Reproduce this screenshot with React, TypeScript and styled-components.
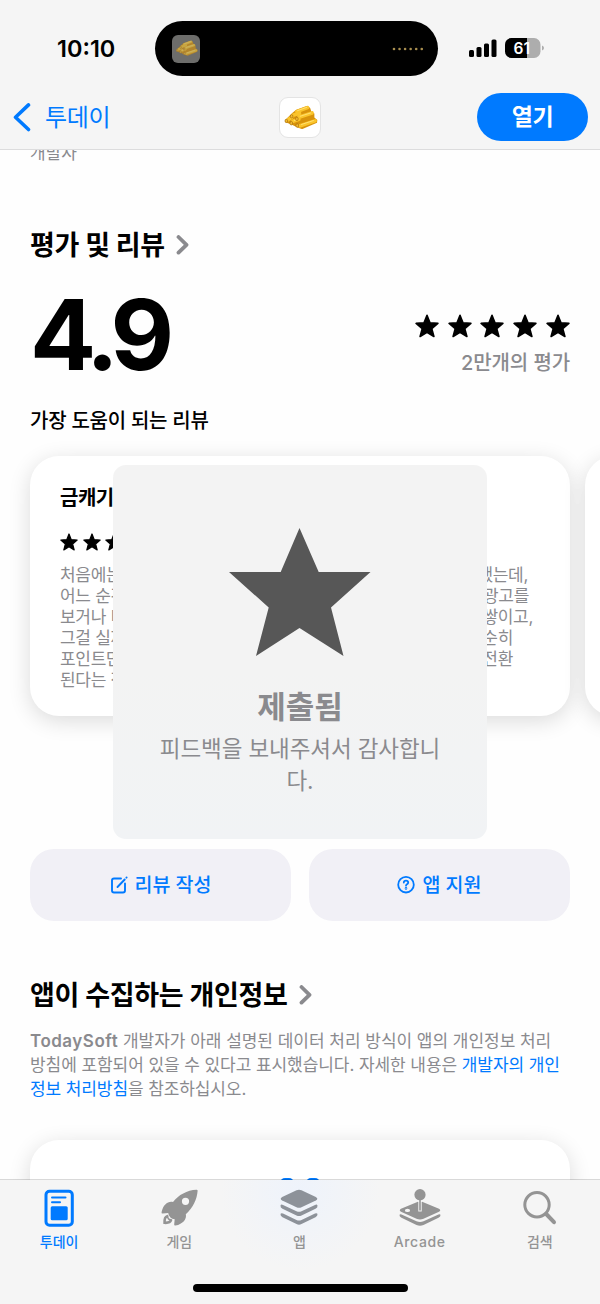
import React from 'react';
import styled, { createGlobalStyle, css } from 'styled-components';

const BLUE = '#007aff';
const GRAY = '#8a8a8e';

const GlobalStyle = createGlobalStyle`
  * { box-sizing: border-box; }
  body { margin: 0; background: #fefefe; }
  p, h1, h2, h3 { margin: 0; font-weight: inherit; font-size: inherit; }
  button { border: 0; background: none; padding: 0; font: inherit; letter-spacing: inherit; }
`;

const Screen = styled.div`
  position: relative;
  width: 600px;
  height: 1304px;
  display: flex;
  flex-direction: column;
  overflow: hidden;
  background: #fefefe;
  color: #000;
  font-family: Inter, 'Noto Sans CJK KR', sans-serif;
`;

interface LabelProps {
  $size: number;
  $weight?: number;
  $color?: string;
  $line?: number;
  $track?: number;
}

const Label = styled.span<LabelProps>`
  display: block;
  white-space: nowrap;
  ${({ $size, $weight = 400, $color = 'inherit', $line = 24, $track = 0 }) => css`
    font-size: ${$size}px;
    font-weight: ${$weight};
    color: ${$color};
    line-height: ${$line}px;
    letter-spacing: ${$track}px;
  `}
`;

/* ---------- header ---------- */

const Header = styled.header`
  flex: none;
  height: 150px;
  background: #f5f5f5;
  border-bottom: 1px solid #dcdcdd;
`;

const StatusBar = styled.div`
  height: 84px;
  padding: 21px 56px 0 57px;
  display: grid;
  grid-template-columns: 98px 284px 1fr;
  align-items: start;
`;

const Clock = styled(Label)`
  padding-top: 16px;
`;

const Island = styled.div`
  width: 283px;
  height: 55px;
  border-radius: 28px;
  background: #000;
  display: flex;
  align-items: center;
  justify-content: space-between;
  padding: 0 14px 0 17px;
`;

const IslandIcon = styled.div`
  width: 28px;
  height: 28px;
  border-radius: 6px;
  background: #6d6d6b;
  display: grid;
  place-items: center;
  svg { opacity: 0.65; }
`;

const StatusIcons = styled.div`
  display: flex;
  align-items: center;
  gap: 8px;
  padding: 17px 0 0 30px;
`;

const NavBar = styled.nav`
  height: 66px;
  display: grid;
  grid-template-columns: 1fr 42px 1fr;
  align-items: center;
  padding: 0 12px;
`;

const BackLink = styled.a`
  display: flex;
  align-items: center;
  gap: 14px;
  padding-top: 1px;
  color: ${BLUE};
`;

const AppIcon = styled.div`
  width: 42px;
  height: 41px;
  border: 1px solid #e4e4e4;
  border-radius: 9px;
  background: #fff;
  display: grid;
  place-items: center;
`;

const OpenButton = styled.button`
  justify-self: end;
  width: 111px;
  height: 48px;
  border-radius: 24px;
  background: ${BLUE};
  display: grid;
  place-items: center;
`;

/* ---------- page body ---------- */

const Body = styled.main`
  flex: 1;
  min-height: 0;
  overflow: hidden;
  padding: 0 30px;
`;

const Developer = styled(Label)`
  margin-top: -9px;
`;

const SectionTitle = styled.h2<{ $top: number }>`
  display: flex;
  align-items: center;
  gap: 11px;
  margin-top: ${({ $top }) => $top}px;
  height: 34px;
`;

const Summary = styled.section`
  display: flex;
  justify-content: space-between;
  height: 118px;
  margin-top: 16px;
`;

const Votes = styled.div`
  display: flex;
  flex-direction: column;
  align-items: flex-end;
  padding-top: 35px;
  gap: 13px;
`;

const Stars = styled.div<{ $gap: number }>`
  display: flex;
  gap: ${({ $gap }) => $gap}px;
`;

const Carousel = styled.section`
  display: flex;
  gap: 15px;
  margin-top: 11px;
`;

const Card = styled.article`
  flex: none;
  width: 540px;
  height: 260px;
  padding: 28px 30px;
  border-radius: 29px;
  background: #fff;
  box-shadow: 0 5px 22px rgba(0, 0, 0, 0.14);
`;

const CardStars = styled(Stars)`
  margin: 21px 0 14px;
`;

const ReviewLine = styled.p<{ $width: number }>`
  display: flex;
  justify-content: space-between;
  width: ${({ $width }) => $width}px;
  height: 21px;
`;

const Actions = styled.section`
  display: grid;
  grid-template-columns: 1fr 1fr;
  gap: 18px;
  margin-top: 133px;
`;

const ActionButton = styled.button`
  height: 72px;
  border-radius: 24px;
  background: #f1f0f6;
  color: ${BLUE};
  display: flex;
  align-items: center;
  justify-content: center;
  gap: 7px;
`;

const Privacy = styled.p`
  margin-top: 16px;
  color: ${GRAY};
  b { font-weight: 600; letter-spacing: 0.5px; }
  a { color: ${BLUE}; }
`;

const PrivacyCard = styled(Card)`
  display: flex;
  justify-content: center;
  padding-top: 38px;
  margin-top: 39px;
`;

/* ---------- submitted toast ---------- */

const Toast = styled.aside`
  position: absolute;
  left: 113px;
  top: 465px;
  width: 374px;
  height: 374px;
  border-radius: 13px;
  background: linear-gradient(#f3f3f3 55%, #f1f3f5);
  display: flex;
  flex-direction: column;
  align-items: center;
  padding-top: 63px;
  color: ${GRAY};
  text-align: center;
`;

const ToastTitle = styled(Label)`
  margin-top: 28px;
`;

const ToastText = styled(Label)`
  margin-top: 3px;
`;

/* ---------- tab bar ---------- */

const TabBar = styled.footer`
  position: relative;
  flex: none;
  height: 124px;
  box-shadow: 0 -1px rgba(0, 0, 0, 0.15);
  background: radial-gradient(circle at 50% 10px, #eef3fb 0, #f5f5f5 80px);
  display: flex;
  flex-direction: column;
  align-items: center;
`;

const Tabs = styled.div`
  width: 100%;
  height: 104px;
  display: grid;
  grid-template-columns: repeat(5, 120.2px);
  margin-left: -2px;
`;

const Tab = styled.a<{ $active?: boolean }>`
  display: flex;
  flex-direction: column;
  align-items: center;
  padding-top: 8px;
  gap: 4px;
  color: ${({ $active }) => ($active ? BLUE : '#949494')};
`;

const HomeIndicator = styled.div`
  width: 215px;
  height: 8px;
  border-radius: 4px;
  background: #000;
`;

/* ---------- drawings ---------- */

const Gold = ({ width }: { width: number }) => (
  <svg width={width} height={width * 0.7} viewBox="36 42 106 74">
    <path d="M42 88L64 66L76 56L108 45L118 50L122 62L131 68V80L140 87L139 96L94 115L80 110L60 100L43 94Z" fill="#d8930c" />
    <g strokeLinecap="round" fill="none">
      <path d="M78 62L110 50M66 73L86 67M84 79L124 66M51 87L62 79M66 91L84 85M88 105L133 90" stroke="#fac42b" strokeWidth="11" />
      <path d="M80 59L108 49M88 76L120 66M92 101L128 89M70 89L80 85" stroke="#ffe071" strokeWidth="3" />
    </g>
    <g fill="#f3bb30" stroke="#9c640a" strokeWidth="1.800">
      <ellipse cx="46" cy="90" rx="4" ry="5" />
      <ellipse cx="61" cy="97" rx="4" ry="5.500" />
      <ellipse cx="62" cy="76" rx="4" ry="5" />
      <ellipse cx="79" cy="104" rx="4" ry="5.500" />
      <ellipse cx="78" cy="84" rx="4" ry="5.500" />
    </g>
  </svg>
);

const Star = ({ size }: { size: number }) => (
  <svg width={size} height={size} viewBox="0 0 24 24">
    <path
      d="M12 1.300L15 8.900L22.900 9.400L16.800 14.600L18.900 22.500L12 18.200L5.100 22.500L7.200 14.600L1.100 9.400L9 8.900Z"
      fill="#000" stroke="#000" strokeWidth="1.600" strokeLinejoin="round"
    />
  </svg>
);

const BigStar = () => (
  <svg width="142" height="128" viewBox="229 528.500 142 128">
    <path d="M299.500 528.500L318.700 572.500H370.500L331 608L343.500 656.500L299.500 628.500L256 656.500L268.700 608L229 572.500H280.700Z" fill="#575757" />
  </svg>
);

const Chevron = () => (
  <svg width="14" height="22" viewBox="0 1.200 14 22">
    <path d="M2.500 3.200L10.500 11L2.500 18.800" fill="none" stroke={GRAY} strokeWidth="3.800" strokeLinecap="round" strokeLinejoin="round" />
  </svg>
);

const BackChevron = () => (
  <svg width="19" height="30" viewBox="0 .8 19 30">
    <path d="M16.500 2.700L3.500 15L16.500 27.300" fill="none" stroke={BLUE} strokeWidth="3.600" strokeLinecap="round" strokeLinejoin="round" />
  </svg>
);

const Signal = () => (
  <svg width="28" height="18" viewBox="0 -.5 28 18">
    <rect x="0" y="10.500" width="5" height="7" rx="1.500" />
    <rect x="7.500" y="7.500" width="5" height="10" rx="1.500" />
    <rect x="15" y="4" width="5" height="13.500" rx="1.500" />
    <rect x="22.500" y="0" width="5" height="17.500" rx="1.500" />
  </svg>
);

const Battery = () => (
  <svg width="40" height="20" viewBox="0 0 40 20">
    <clipPath id="charge"><rect width="22" height="20" /></clipPath>
    <rect width="35.500" height="20" rx="6.500" fill="#adadad" />
    <rect width="35.500" height="20" rx="6.500" clipPath="url(#charge)" />
    <path d="M37 7.500q2 .8 2 2.500t-2 2.500z" fill="#adadad" />
    <text x="16.800" y="15.700" textAnchor="middle" fill="#fff" fontFamily="Inter" fontSize="15.500" fontWeight="600">61</text>
  </svg>
);

const Dots = () => (
  <svg width="32" height="4" viewBox="0 0 32 4" fill="#a98f50">
    {[0, 1, 2, 3, 4, 5].map((i) => <circle key={i} cx={2 + i * 5.55} cy="2" r="1.300" />)}
  </svg>
);

const Compose = () => (
  <svg width="18" height="19" viewBox="0 .5 18 19" fill="none" stroke={BLUE} strokeWidth="1.900" strokeLinecap="round">
    <path d="M11 3H4Q2 3 2 5V15Q2 17 4 17H13Q15 17 15 15V8" />
    <path d="M7.500 11.500L14.700 4M16.400 2.200L16.600 2" />
  </svg>
);

const Help = () => (
  <svg width="18" height="18" viewBox="0 .5 18 18" fill="none" stroke={BLUE} strokeWidth="1.800" strokeLinecap="round">
    <circle cx="9" cy="9.200" r="7.800" />
    <path d="M6.800 7Q6.900 5.100 9 5.100T11.200 6.900Q11.200 8 10 8.700Q9 9.300 9 10.200" />
    <circle cx="9" cy="12.900" r=".4" />
  </svg>
);

const PeopleIcon = () => (
  <svg width="40" height="24" viewBox="0 0 40 24" fill={BLUE}>
    <rect x="0" y="0" width="14" height="14" rx="5" />
    <rect x="26" y="0" width="14" height="14" rx="5" />
  </svg>
);

const TodayIcon = () => (
  <svg width="40" height="40" viewBox="0 0 40 40">
    <rect x="7" y="3.300" width="26.300" height="34" rx="3.500" fill="none" stroke="currentColor" strokeWidth="3" />
    <path d="M13 9.500H26.500M13 14.300H21" stroke="currentColor" strokeWidth="2" strokeLinecap="round" />
    <rect x="11.700" y="18.300" width="17" height="14" rx="1.500" fill="currentColor" />
  </svg>
);

const RocketIcon = () => (
  <svg width="40" height="40" viewBox="0 0 40 40" fill="currentColor">
    <path
      fillRule="evenodd"
      d="M37.500 1.800Q38.800 1.700 38.600 3C38 11 34 20 26.800 26.200C28 31 24 36 16.500 37.600Q14.900 37.800 15.200 36.300L15.700 31.300Q13 31.200 11.400 29.600Q9.400 27.500 9.200 25L3.700 25.500Q2.200 25.700 2.600 24C4.300 16.500 9 12.800 14 14C19.500 7 28 2.200 37.500 1.800ZM26.500 9.700A3.600 3.600 0 1 0 26.500 16.900A3.600 3.600 0 1 0 26.500 9.700Z"
    />
    <path d="M8.200 28.200C5.800 28.900 5.400 31.800 5.600 34.800C8.600 35 11.300 34.600 12 32.200" fill="none" stroke="currentColor" strokeWidth="2.600" strokeLinecap="round" />
    <path d="M8.500 28.300Q8.600 31.300 11.800 32.300" fill="none" stroke="currentColor" strokeWidth="1.400" />
  </svg>
);

const StackIcon = () => (
  <svg width="40" height="40" viewBox="0 0 40 40" fill="#8d9299">
    <path d="M17.500 2.300Q20 1.200 22.500 2.300L36.800 9Q39.800 10.800 36.800 12.600L22.500 19.300Q20 20.400 17.500 19.300L3.200 12.600Q.2 10.800 3.200 9Z" />
    <path d="M1.500 17.400Q2 16 4 16.900L17.500 23.300Q20 24.400 22.500 23.300L36 16.900Q38 16 38.500 17.400Q38.800 19.500 36.500 20.700L22.500 27.500Q20 28.600 17.500 27.500L3.500 20.700Q1.200 19.500 1.500 17.400Z" />
    <path d="M1.500 26Q2 24.600 4 25.500L17.500 31.900Q20 33 22.500 31.900L36 25.500Q38 24.600 38.500 26Q38.800 28.100 36.500 29.300L22.500 36.100Q20 37.200 17.500 36.100L3.500 29.300Q1.200 28.100 1.500 26Z" />
  </svg>
);

const ArcadeIcon = () => (
  <svg width="44" height="40" viewBox="0 0 44 40" fill="currentColor">
    <circle cx="22" cy="6.700" r="5.600" />
    <path fillRule="evenodd" d="M19.300 14V14Q20 13.500 20.300 14V23.500H23.700V14Q24 13.500 24.700 14L41 20.800Q43.500 22.200 41 23.700L25.500 30.800Q22 32.300 18.500 30.800L3 23.700Q.5 22.200 3 20.800ZM9.500 20.700A2.600 1.700 0 1 0 9.500 24.100A2.600 1.700 0 1 0 9.500 20.700Z" />
    <rect x="21.200" y="12" width="1.600" height="10.500" />
    <path d="M1.500 27Q1.700 25.700 3.500 26.400L18.500 33.300Q22 34.800 25.500 33.300L40.500 26.400Q42.300 25.700 42.500 27Q42.700 28.700 40.500 29.700L25.500 37Q22 38.500 18.500 37L3.500 29.700Q1.300 28.700 1.500 27Z" />
  </svg>
);

const SearchIcon = () => (
  <svg width="40" height="40" viewBox="0 0 40 40" fill="none" stroke="currentColor" strokeLinecap="round">
    <circle cx="17" cy="16.800" r="12.200" strokeWidth="3" />
    <path d="M26.200 26L34 34.200" strokeWidth="4" />
  </svg>
);

/* ---------- data ---------- */

const reviewLines = [
  { start: '처음에는', end: '했는데,', width: 468 },
  { start: '어느 순간', end: '광고를', width: 469 },
  { start: '보거나 미', end: '쌓이고,', width: 473 },
  { start: '그걸 실제', end: '단순히', width: 453 },
  { start: '포인트만', end: '전환', width: 453 },
  { start: '된다는 점', end: '', width: 453 },
];

const tabs = [
  { name: '투데이', Icon: TodayIcon, active: true },
  { name: '게임', Icon: RocketIcon },
  { name: '앱', Icon: StackIcon },
  { name: 'Arcade', Icon: ArcadeIcon, track: 0.6 },
  { name: '검색', Icon: SearchIcon },
];

const FiveStars = ({ size }: { size: number }) => (
  <>{[0, 1, 2, 3, 4].map((i) => <Star key={i} size={size} />)}</>
);

export default function App() {
  return (
    <Screen>
      <GlobalStyle />
      <Header>
        <StatusBar>
          <Clock $size={23.5} $weight={600}>10:10</Clock>
          <Island>
            <IslandIcon><Gold width={23} /></IslandIcon>
            <Dots />
          </Island>
          <StatusIcons><Signal /><Battery /></StatusIcons>
        </StatusBar>
        <NavBar>
          <BackLink><BackChevron /><Label $size={24} $line={34} $track={-0.3}>투데이</Label></BackLink>
          <AppIcon><Gold width={35} /></AppIcon>
          <OpenButton><Label $size={23} $weight={700} $color="#fff" $line={34} $track={-0.4}>열기</Label></OpenButton>
        </NavBar>
      </Header>

      <Body>
        <Developer $size={17} $color={GRAY}>개발자</Developer>
        <SectionTitle $top={64}>
          <Label $size={27} $weight={700} $line={34} $track={-0.3}>평가 및 리뷰</Label>
          <Chevron />
        </SectionTitle>
        <Summary>
          <Label $size={98} $weight={700} $line={112} $track={-7}>4.9</Label>
          <Votes>
            <Stars $gap={8.8}><FiveStars size={24} /></Stars>
            <Label $size={20} $weight={500} $color={GRAY} $track={-0.1}>2만개의 평가</Label>
          </Votes>
        </Summary>
        <Label $size={20} $weight={500} $line={48} $track={-0.25}>가장 도움이 되는 리뷰</Label>
        <Carousel>
          <Card>
            <Label $size={20} $weight={600} $line={28} $track={-0.5}>금캐기</Label>
            <CardStars $gap={4.7}><FiveStars size={18} /></CardStars>
            {reviewLines.map((line) => (
              <ReviewLine key={line.start} $width={line.width}>
                <Label $size={17} $color={GRAY} $line={21} $track={-0.3}>{line.start}</Label>
                <Label $size={17} $color={GRAY} $line={21} $track={-0.3}>{line.end}</Label>
              </ReviewLine>
            ))}
          </Card>
          <Card />
        </Carousel>
        <Actions>
          <ActionButton><Compose /><Label $size={19.5} $weight={500} $line={30}>리뷰 작성</Label></ActionButton>
          <ActionButton><Help /><Label $size={19.5} $weight={500} $line={30}>앱 지원</Label></ActionButton>
        </Actions>
        <SectionTitle $top={58}>
          <Label $size={27} $weight={700} $line={34} $track={-0.3}>앱이 수집하는 개인정보</Label>
          <Chevron />
        </SectionTitle>
        <Privacy>
          <Label $size={17} $track={-0.03}><b>TodaySoft</b> 개발자가 아래 설명된 데이터 처리 방식이 앱의 개인정보 처리</Label>
          <Label $size={17} $track={-0.07}>방침에 포함되어 있을 수 있다고 표시했습니다. 자세한 내용은 <a>개발자의 개인</a></Label>
          <Label $size={17} $track={-0.1}><a>정보 처리방침</a>을 참조하십시오.</Label>
        </Privacy>
        <PrivacyCard><PeopleIcon /></PrivacyCard>
      </Body>

      <TabBar>
        <Tabs>
          {tabs.map(({ name, Icon, active, track }) => (
            <Tab key={name} $active={active}>
              <Icon />
              <Label $size={14} $weight={500} $line={20} $track={track}>{name}</Label>
            </Tab>
          ))}
        </Tabs>
        <HomeIndicator />
      </TabBar>

      <Toast>
        <BigStar />
        <ToastTitle $size={31} $weight={600} $line={46}>제출됨</ToastTitle>
        <ToastText $size={22.5} $line={31.5} $track={-0.1}>피드백을 보내주셔서 감사합니<br />다.</ToastText>
      </Toast>
    </Screen>
  );
}
